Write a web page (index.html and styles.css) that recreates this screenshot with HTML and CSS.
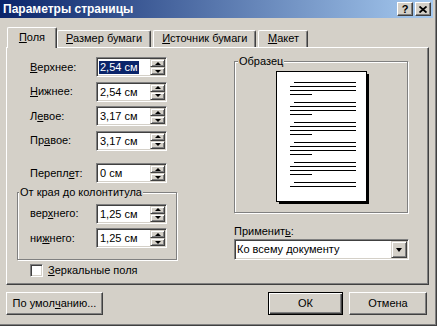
FILE: index.html
```html
<!doctype html>
<html lang="ru">
<head>
  <meta charset="utf-8">
  <title>Параметры страницы</title>
  <link rel="stylesheet" href="styles.css">
</head>
<body>

<div class="window">
  <div class="titlebar">
    <span class="title">Параметры страницы</span>
    <div class="caption-buttons">
      <span class="cap-btn">?</span>
      <span class="cap-btn">
        <svg width="8" height="7" viewBox="0 0 8 7"><path d="M0.5 0.5L7.5 6.5M7.5 0.5L0.5 6.5" stroke="#000" stroke-width="1.8"/></svg>
      </span>
    </div>
  </div>

  <div class="tabs">
    <div class="tab active"><u>П</u>оля</div>
    <div class="tab"><u>Р</u>азмер бумаги</div>
    <div class="tab"><u>И</u>сточник бумаги</div>
    <div class="tab"><u>М</u>акет</div>
  </div>

  <div class="panel">
    <div class="left-col">
      <div class="field">
        <label class="field-label"><u>В</u>ерхнее:</label>
        <div class="spin"><span class="spin-value"><span class="selected">2,54 см</span></span><span class="spin-buttons"><span class="spin-btn up"></span><span class="spin-btn down"></span></span></div>
      </div>
      <div class="field">
        <label class="field-label"><u>Н</u>ижнее:</label>
        <div class="spin"><span class="spin-value">2,54 см</span><span class="spin-buttons"><span class="spin-btn up"></span><span class="spin-btn down"></span></span></div>
      </div>
      <div class="field">
        <label class="field-label">Л<u>е</u>вое:</label>
        <div class="spin"><span class="spin-value">3,17 см</span><span class="spin-buttons"><span class="spin-btn up"></span><span class="spin-btn down"></span></span></div>
      </div>
      <div class="field">
        <label class="field-label">Пр<u>а</u>вое:</label>
        <div class="spin"><span class="spin-value">3,17 см</span><span class="spin-buttons"><span class="spin-btn up"></span><span class="spin-btn down"></span></span></div>
      </div>
      <div class="field gutter">
        <label class="field-label">Перепл<u>е</u>т:</label>
        <div class="spin"><span class="spin-value">0 см</span><span class="spin-buttons"><span class="spin-btn up"></span><span class="spin-btn down"></span></span></div>
      </div>

      <fieldset class="group header-group">
        <legend>От края до колонтитула</legend>
        <div class="field">
          <label class="field-label">вер<u>х</u>него:</label>
          <div class="spin"><span class="spin-value">1,25 см</span><span class="spin-buttons"><span class="spin-btn up"></span><span class="spin-btn down"></span></span></div>
        </div>
        <div class="field">
          <label class="field-label">ни<u>ж</u>него:</label>
          <div class="spin"><span class="spin-value">1,25 см</span><span class="spin-buttons"><span class="spin-btn up"></span><span class="spin-btn down"></span></span></div>
        </div>
      </fieldset>

      <label class="check">
        <span class="check-box"></span>
        <span><u>З</u>еркальные поля</span>
      </label>
    </div>

    <div class="right-col">
      <fieldset class="group sample">
        <legend>Образец</legend>
        <svg class="page" width="93" height="133" viewBox="0 0 93 133">
          <rect x="3" y="131" width="90" height="2" fill="#000"/>
          <rect x="91" y="3" width="2" height="130" fill="#000"/>
          <rect x="0.5" y="0.5" width="90" height="130" fill="#fff" stroke="#000"/>
          <g fill="#000">
            <rect x="18" y="11" width="62" height="1"/><rect x="14" y="15" width="66" height="1"/><rect x="14" y="19" width="66" height="1"/><rect x="14" y="23" width="22" height="1"/>
            <rect x="18" y="31" width="62" height="1"/><rect x="14" y="35" width="66" height="1"/><rect x="14" y="39" width="66" height="1"/><rect x="14" y="43" width="22" height="1"/>
            <rect x="18" y="51" width="62" height="1"/><rect x="14" y="55" width="66" height="1"/><rect x="14" y="59" width="66" height="1"/><rect x="14" y="63" width="22" height="1"/>
            <rect x="18" y="71" width="62" height="1"/><rect x="14" y="75" width="66" height="1"/><rect x="14" y="79" width="66" height="1"/><rect x="14" y="83" width="22" height="1"/>
            <rect x="18" y="91" width="62" height="1"/><rect x="14" y="95" width="66" height="1"/><rect x="14" y="99" width="66" height="1"/><rect x="14" y="103" width="22" height="1"/>
            <rect x="18" y="111" width="62" height="1"/><rect x="14" y="115" width="66" height="1"/>
          </g>
        </svg>
      </fieldset>

      <label class="apply-label">Применит<u>ь</u>:</label>
      <div class="combo">
        <span class="combo-value">Ко всему документу</span>
        <span class="combo-btn"></span>
      </div>
    </div>
  </div>

  <div class="buttons">
    <span class="btn defaults">По умол<u>ч</u>анию...</span>
    <span class="btn default ok">ОК</span>
    <span class="btn cancel">Отмена</span>
  </div>
</div>

</body>
</html>
```

FILE: styles.css
```css
* {
  box-sizing: border-box;
}
body {
  margin: 0;
  font-family: "Liberation Sans", Arial, sans-serif;
  font-size: 11px;
  line-height: 13px;
  color: #000;
  background: #d4d0c8;
}
u {
  text-decoration: underline;
  text-underline-offset: 1px;
}

.window {
  width: 437px;
  height: 326px;
  background: #d4d0c8;
  border-right: 1px solid #404040;
  border-bottom: 1px solid #404040;
  box-shadow: inset -1px -1px #808080;
  padding-right: 3px;
}

/* title bar */
.titlebar {
  height: 18px;
  display: flex;
  align-items: center;
  justify-content: space-between;
  padding: 0 2px 0 3px;
  background: linear-gradient(to right, #0a246a, #a6caf0);
  color: #fff;
}
.title {
  font-weight: bold;
  font-size: 12px;
}
.caption-buttons {
  display: flex;
  gap: 2px;
}
.cap-btn {
  width: 16px;
  height: 14px;
  display: flex;
  align-items: center;
  justify-content: center;
  background: #d4d0c8;
  color: #000;
  font-weight: bold;
  font-size: 11px;
  border: 1px solid;
  border-color: #fff #404040 #404040 #fff;
  box-shadow: inset -1px -1px #808080;
}

/* tabs */
.tabs {
  display: flex;
  align-items: flex-end;
  gap: 2px;
  margin-top: 9px;
  padding-left: 9px;
  position: relative;
  z-index: 1;
}
.tab {
  min-width: 50px;
  padding: 1px 8px 2px;
  text-align: center;
  border: 1px solid;
  border-bottom: 0;
  border-color: #fff #404040 #404040 #fff;
  border-radius: 2px 2px 0 0;
  box-shadow: inset -1px 0 #808080;
  background: #d4d0c8;
}
.tab.active {
  margin: 0 -2px -1px;
  padding: 3px 10px 4px;
}

/* panel */
.panel {
  margin-left: 6px;
  width: 423px;
  height: 238px;
  display: flex;
  justify-content: space-between;
  padding: 9px 19px 0 10px;
  border: 1px solid;
  border-color: #fff #404040 #404040 #fff;
  box-shadow: inset -1px -1px #808080;
}
.left-col {
  width: 161px;
  display: flex;
  flex-direction: column;
}
.right-col {
  width: 175px;
  margin-top: -2px;
  display: flex;
  flex-direction: column;
}

.field {
  display: flex;
  align-items: center;
  padding-left: 13px;
  margin-bottom: 4.5px;
}
.field-label {
  width: 66px;
}
.field.gutter {
  margin-top: 8px;
}

.spin {
  width: 71px;
  height: 20px;
  display: flex;
  padding: 1px;
  background: #fff;
  border: 1px solid;
  border-color: #808080 #fff #fff #808080;
  box-shadow: inset 1px 1px #404040, inset -1px -1px #d4d0c8;
}
.spin-value {
  flex: 1;
  padding-left: 2px;
  line-height: 16px;
}
.selected {
  display: inline-block;
  margin-left: -1px;
  padding: 0 1px;
  line-height: 13px;
  background: #0a246a;
  color: #fff;
}
.spin-buttons {
  display: flex;
  flex-direction: column;
  width: 15px;
}
.spin-btn {
  height: 8px;
  display: flex;
  align-items: center;
  justify-content: center;
  background: #d4d0c8;
  border: 1px solid;
  border-color: #d4d0c8 #404040 #404040 #d4d0c8;
  box-shadow: inset 1px 1px #fff, inset -1px -1px #808080;
}
.spin-btn::before {
  content: "";
  border-left: 3px solid transparent;
  border-right: 3px solid transparent;
}
.spin-btn.up::before {
  border-bottom: 3px solid #000;
}
.spin-btn.down::before {
  border-top: 3px solid #000;
}

/* group boxes */
.group {
  margin: 0;
  min-width: 0;
  border: 1px solid #808080;
  box-shadow: inset 1px 1px #fff, 1px 1px #fff;
}
.group legend {
  padding: 0 1px;
  background: #d4d0c8;
}
.header-group {
  width: 160px;
  margin-top: -2px;
  padding: 5px 0 6px 12px;
}
.header-group legend {
  margin-left: -11px;
}
.header-group .field {
  padding-left: 0;
}

.check {
  display: flex;
  align-items: center;
  gap: 5px;
  margin-top: 4px;
  padding-left: 13px;
}
.check-box {
  width: 13px;
  height: 13px;
  background: #fff;
  border: 1px solid;
  border-color: #808080 #fff #fff #808080;
  box-shadow: inset 1px 1px #404040, inset -1px -1px #d4d0c8;
}

.sample {
  width: 174px;
  padding: 3px 0 8px 0;
}
.sample legend {
  margin-left: 3px;
}
.page {
  display: block;
  margin-left: 41px;
}

.apply-label {
  margin-top: 12px;
}
.combo {
  margin-top: 1px;
  height: 21px;
  display: flex;
  padding: 1px;
  background: #fff;
  border: 1px solid;
  border-color: #808080 #fff #fff #808080;
  box-shadow: inset 1px 1px #404040, inset -1px -1px #d4d0c8;
}
.combo-value {
  flex: 1;
  padding-left: 1px;
  line-height: 17px;
}
.combo-btn {
  width: 16px;
  display: flex;
  align-items: center;
  justify-content: center;
  background: #d4d0c8;
  border: 1px solid;
  border-color: #d4d0c8 #404040 #404040 #d4d0c8;
  box-shadow: inset 1px 1px #fff, inset -1px -1px #808080;
}
.combo-btn::before {
  content: "";
  border-left: 3.5px solid transparent;
  border-right: 3.5px solid transparent;
  border-top: 4px solid #000;
}

/* bottom buttons */
.buttons {
  display: flex;
  align-items: flex-start;
  gap: 6px;
  padding: 7px 6px 0 6px;
}
.btn {
  height: 23px;
  display: flex;
  align-items: center;
  justify-content: center;
  border: 1px solid;
  border-color: #fff #404040 #404040 #fff;
  box-shadow: inset -1px -1px #808080;
}
.btn.defaults {
  width: 97px;
}
.btn.ok {
  width: 75px;
  margin-left: auto;
}
.btn.cancel {
  width: 78px;
}
.btn.default {
  border-color: #000;
  box-shadow: inset 1px 1px #fff, inset -1px -1px #404040, inset -2px -2px #808080;
}
```
